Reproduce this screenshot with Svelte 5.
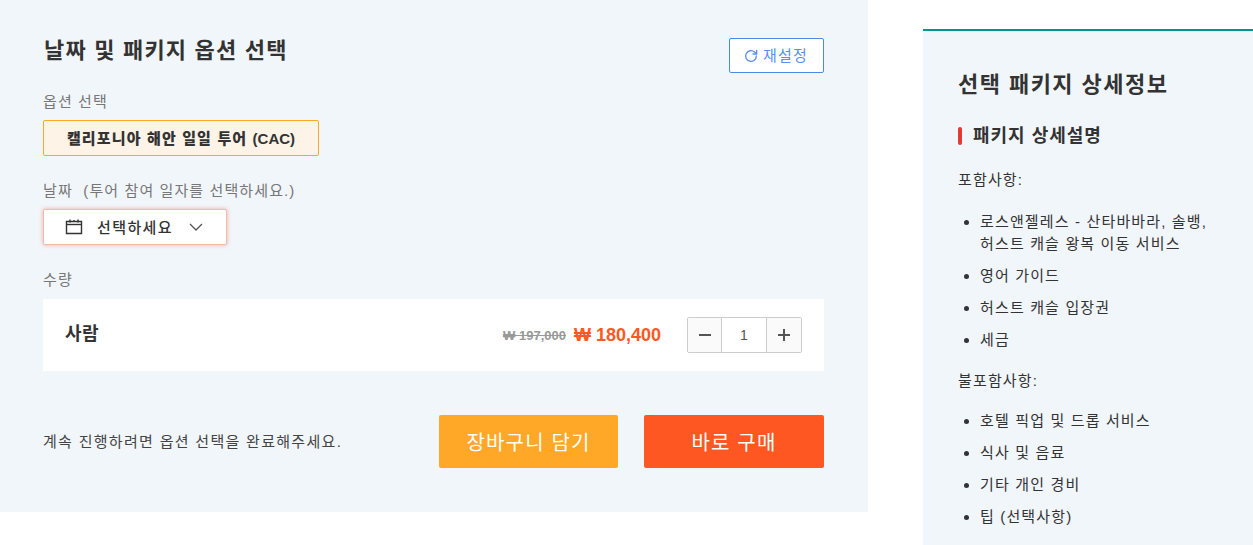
<script>
  let qty = $state(1);

  const included = [
    '로스앤젤레스 - 산타바바라, 솔뱅, 허스트 캐슬 왕복 이동 서비스',
    '영어 가이드',
    '허스트 캐슬 입장권',
    '세금'
  ];
  const excluded = ['호텔 픽업 및 드롭 서비스', '식사 및 음료', '기타 개인 경비', '팁 (선택사항)'];
</script>

<div class="page">
  <section class="options">
    <div class="head">
      <h2>날짜 및 패키지 옵션 선택</h2>
      <button class="reset" type="button">
        <svg viewBox="0 0 24 24" width="16" height="16" fill="none" stroke="currentColor" stroke-width="2" stroke-linecap="round" stroke-linejoin="round">
          <path d="M20 12a8 8 0 1 1-2.6-5.9L20 8.5" />
          <path d="M20.5 3.5v5.5H15" />
        </svg>
        <span>재설정</span>
      </button>
    </div>

    <div class="label first">옵션 선택</div>
    <button class="chip" type="button"><b>캘리포니아 해안 일일 투어 <span>(CAC)</span></b></button>

    <div class="label date-label">날짜 &nbsp;(투어 참여 일자를 선택하세요.)</div>
    <button class="date" type="button">
      <svg viewBox="0 0 18 18" width="18" height="18" fill="none" stroke="#333" stroke-width="1.4">
        <path d="M1.5 3.5h15v12h-15z" />
        <path d="M1.5 6.5h15" />
        <path d="M5 1.5v3M9 2v1.5M13 1.5v3" />
      </svg>
      <span>선택하세요</span>
      <svg class="chev" viewBox="0 0 14 8" width="14" height="8" fill="none" stroke="#555" stroke-width="1.3">
        <path d="M1 1l6 6 6-6" />
      </svg>
    </button>

    <div class="label qty-label">수량</div>
    <div class="row">
      <strong>사람</strong>
      <div class="right">
        <s>₩ 197,000</s>
        <span class="price">₩ 180,400</span>
        <div class="stepper">
          <button type="button" onclick={() => (qty = Math.max(1, qty - 1))}>
            <svg viewBox="0 0 12 12" width="12" height="12"><path d="M0 6h12" stroke="#555" stroke-width="2" /></svg>
          </button>
          <span>{qty}</span>
          <button type="button" onclick={() => qty++}>
            <svg viewBox="0 0 12 12" width="12" height="12"><path d="M0 6h12M6 0v12" stroke="#555" stroke-width="2" /></svg>
          </button>
        </div>
      </div>
    </div>

    <div class="actions">
      <p>계속 진행하려면 옵션 선택을 완료해주세요.</p>
      <button class="cart" type="button">장바구니 담기</button>
      <button class="buy" type="button">바로 구매</button>
    </div>
  </section>

  <aside class="detail">
    <h2 class="wide">선택 패키지 상세정보</h2>
    <h3>패키지 상세설명</h3>
    <p class="lead">포함사항:</p>
    <ul>
      {#each included as item}
        <li>{item}</li>
      {/each}
    </ul>
    <p>불포함사항:</p>
    <ul class="tight">
      {#each excluded as item}
        <li>{item}</li>
      {/each}
    </ul>
  </aside>
</div>

<style>
  :global(body) {
    margin: 0;
    overflow: hidden;
    background: #fff;
  }

  .page {
    display: flex;
    align-items: flex-start;
    gap: 55px;
    font-family: "Liberation Sans", "Noto Sans CJK KR", sans-serif;
    color: #333;
    height: 545px;
    overflow: hidden;
  }

  button {
    font-family: inherit;
    cursor: pointer;
  }

  .options {
    box-sizing: border-box;
    width: 868px;
    height: 512px;
    flex-shrink: 0;
    padding: 38px 44px 0 43px;
    background: #f1f6fb;
  }

  .head {
    display: flex;
    justify-content: space-between;
    align-items: flex-start;
  }

  h2 {
    margin: 0 0 0 1px;
    font-size: 22px;
    line-height: 26px;
    font-weight: 700;
    letter-spacing: 1.2px;
    color: #333;
  }

  h2.wide {
    margin: 0;
    letter-spacing: 1.45px;
  }

  .reset {
    display: flex;
    align-items: center;
    justify-content: center;
    gap: 4px;
    width: 95px;
    height: 35px;
    padding: 0 2px 0 0;
    background: #fff;
    border: 1px solid #4f87ea;
    border-radius: 2px;
    color: #5a8fee;
    font-size: 15px;
    letter-spacing: 1.2px;
  }

  .reset span {
    margin-top: -2px;
  }

  .label {
    font-size: 15px;
    line-height: 20px;
    letter-spacing: 1.1px;
    color: #777;
  }

  .first {
    margin-top: 19px;
  }

  .chip {
    display: block;
    width: 276px;
    height: 36px;
    margin-top: 8px;
    padding: 0;
    background: #fdf3e7;
    border: 1px solid #ffa726;
    border-radius: 2px;
    font-size: 15px;
    font-weight: 700;
    letter-spacing: 1.15px;
    color: #333;
  }

  .chip b {
    position: relative;
    top: -1px;
  }

  .chip span {
    letter-spacing: 0;
  }

  .date-label {
    margin-top: 25px;
  }

  .date {
    display: flex;
    align-items: center;
    width: 184px;
    height: 36px;
    margin-top: 8px;
    padding: 0 0 0 21px;
    background: #fff;
    border: 1px solid #f3b9ab;
    border-radius: 2px;
    box-shadow: 0 0 4px rgba(240, 110, 80, 0.55);
    font-size: 15px;
    font-weight: 500;
    letter-spacing: 1.4px;
    color: #333;
  }

  .date span {
    margin: -2px 0 0 14px;
  }

  .chev {
    margin-left: 16px;
  }

  .qty-label {
    margin-top: 25px;
  }

  .row {
    display: flex;
    justify-content: space-between;
    align-items: center;
    height: 72px;
    margin-top: 9px;
    padding: 0 22px;
    background: #fff;
  }

  .row strong {
    font-size: 18px;
    letter-spacing: 0.5px;
    margin-top: -6px;
  }

  .right {
    display: flex;
    align-items: center;
  }

  s {
    font-size: 13px;
    color: #999;
    font-weight: 700;
  }

  .price {
    margin-left: 8px;
    font-size: 18px;
    font-weight: 700;
    color: #ff5722;
  }

  .stepper {
    display: flex;
    height: 34px;
    margin-left: 26px;
    border: 1px solid #ccc;
    border-radius: 2px;
    background: #fff;
  }

  .stepper button {
    display: flex;
    align-items: center;
    justify-content: center;
    width: 33px;
    padding: 0;
    background: #fafafa;
    border: none;
  }

  .stepper button:last-child {
    width: 34px;
  }

  .stepper span {
    box-sizing: border-box;
    width: 46px;
    line-height: 34px;
    text-align: center;
    font-size: 14px;
    color: #555;
    border-left: 1px solid #ccc;
    border-right: 1px solid #ccc;
  }

  .actions {
    display: flex;
    align-items: center;
    margin-top: 44px;
  }

  .actions p {
    flex: 1;
    margin: -2px 0 0;
    font-size: 15px;
    letter-spacing: 1.3px;
    color: #444;
  }

  .cart,
  .buy {
    height: 53px;
    border: none;
    border-radius: 2px;
    color: #fff;
    font-size: 20px;
    letter-spacing: 1.15px;
    padding: 0;
  }

  .cart {
    width: 179px;
    background: #ffa726;
  }

  .buy {
    width: 180px;
    margin-left: 26px;
    background: #ff5722;
  }

  .detail {
    box-sizing: border-box;
    flex: 1;
    margin-top: 29px;
    padding: 41px 35px 0;
    min-height: 560px;
    background: #f1f6fb;
    border-top: 2px solid #009688;
    font-size: 15px;
    letter-spacing: 1.15px;
  }

  h3 {
    position: relative;
    margin: 25px 0 0;
    padding-left: 15px;
    font-size: 18px;
    line-height: 26px;
    font-weight: 700;
    letter-spacing: 1px;
  }

  h3::before {
    content: "";
    position: absolute;
    left: 0;
    top: 4px;
    width: 4px;
    height: 18px;
    border-radius: 2px;
    background: #e53935;
  }

  .detail p {
    margin: 18px 0 0;
    line-height: 24px;
  }

  .detail p.lead {
    margin-top: 19px;
  }

  ul {
    margin: 19px 0 0;
    padding-left: 22px;
  }

  ul.tight {
    margin-top: 17px;
  }

  li {
    line-height: 22px;
    margin-bottom: 10px;
  }
</style>
